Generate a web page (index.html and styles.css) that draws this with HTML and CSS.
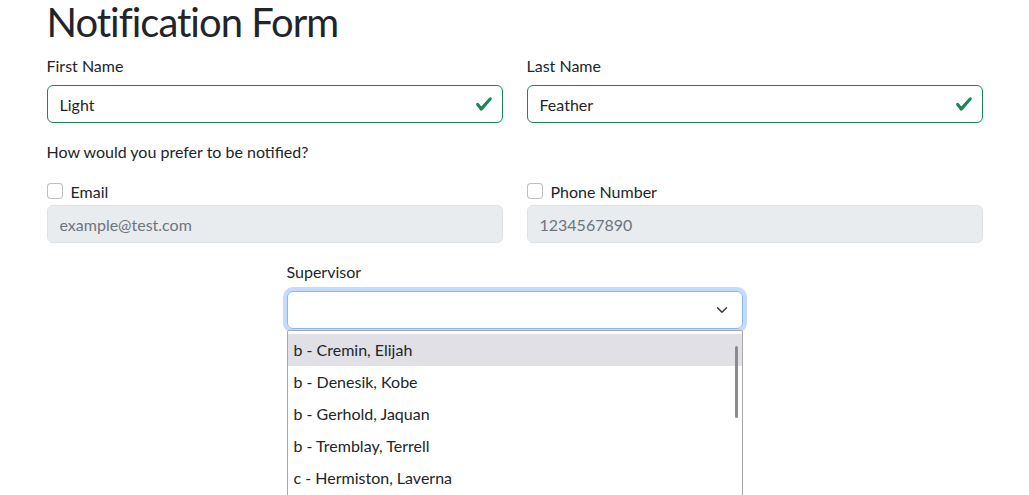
FILE: index.html
```html
<!DOCTYPE html>
<html lang="en">
<head>
<meta charset="utf-8">
<title>Notification Form</title>
<link rel="stylesheet" href="styles.css">
</head>
<body>
<div class="container">
  <h1 class="title">Notification Form</h1>
  <div class="row">
    <div class="field">
      <label class="form-label">First Name</label>
      <div class="input valid">
        <span class="value">Light</span>
        <svg class="check" viewBox="0 0 8 8" width="18" height="18"><path fill="#198754" d="M2.3 6.73.6 4.53c-.4-1.04.46-1.4 1.1-.8l1.1 1.4 3.4-3.8c.6-.63 1.6-.27 1.2.7l-4 4.6c-.43.5-.8.4-1.1.1z"/></svg>
      </div>
    </div>
    <div class="field">
      <label class="form-label">Last Name</label>
      <div class="input valid">
        <span class="value">Feather</span>
        <svg class="check" viewBox="0 0 8 8" width="18" height="18"><path fill="#198754" d="M2.3 6.73.6 4.53c-.4-1.04.46-1.4 1.1-.8l1.1 1.4 3.4-3.8c.6-.63 1.6-.27 1.2.7l-4 4.6c-.43.5-.8.4-1.1.1z"/></svg>
      </div>
    </div>
  </div>
  <p class="prompt">How would you prefer to be notified?</p>
  <div class="row">
    <div class="field">
      <div class="form-check"><span class="checkbox"></span><label>Email</label></div>
      <div class="input disabled"><span class="placeholder">example@test.com</span></div>
    </div>
    <div class="field">
      <div class="form-check"><span class="checkbox"></span><label>Phone Number</label></div>
      <div class="input disabled"><span class="placeholder">1234567890</span></div>
    </div>
  </div>
  <div class="select-field">
    <label class="form-label">Supervisor</label>
    <div class="select-wrap">
      <div class="select">
        <svg class="chevron" viewBox="0 0 16 16" width="16" height="12"><path fill="none" stroke="#343a40" stroke-linecap="round" stroke-linejoin="round" stroke-width="2" d="m2 5 6 6 6-6"/></svg>
      </div>
      <div class="dropdown">
        <div class="option active">b - Cremin, Elijah</div>
        <div class="option">b - Denesik, Kobe</div>
        <div class="option">b - Gerhold, Jaquan</div>
        <div class="option">b - Tremblay, Terrell</div>
        <div class="option">c - Hermiston, Laverna</div>
        <span class="scroll-thumb"></span>
      </div>
    </div>
  </div>
</div>
</body>
</html>
```

FILE: styles.css
```css
* { box-sizing: border-box; }
html, body { height: 100%; }
body {
  margin: 0;
  overflow: hidden;
  background: #fff;
  color: #212529;
  font-family: "Lato", "Noto Sans", sans-serif;
  font-size: 16px;
  line-height: 24px;
}
.container {
  width: 936px;
  margin: 0 auto;
}
.title {
  margin: 0 0 8px;
  font-size: 40px;
  line-height: 45px;
  font-weight: 400;
  letter-spacing: -1px;
}
.row {
  display: grid;
  grid-template-columns: 1fr 1fr;
  column-gap: 24px;
}
.field { margin-bottom: 16px; }
.form-label {
  display: block;
  margin-bottom: 8px;
  padding-top: 1px;
  height: 24px;
}
.input {
  height: 38px;
  padding: 7px 12px 5px;
  border: 1px solid #dee2e6;
  border-radius: 6px;
  display: flex;
  align-items: center;
  justify-content: space-between;
}
.input.valid {
  border-color: #198754;
  padding-right: 9px;
}
.check { margin-top: -2px; }
.input.disabled {
  background: #e9ecef;
}
.placeholder { color: #6c757d; }
.prompt { margin: 0 0 16px; padding-top: 1px; height: 24px; }
.form-check {
  display: flex;
  align-items: flex-start;
  gap: 8px;
  height: 24px;
  margin-bottom: 2px;
}
.form-check label { padding-top: 1px; }
.checkbox {
  width: 16px;
  height: 16px;
  margin-top: 4px;
  border: 1px solid rgba(0, 0, 0, .25);
  border-radius: 4px;
  background: #fff;
}
.select-field {
  width: 456px;
  margin-left: 240px;
}
.select-wrap { position: relative; }
.select {
  height: 38px;
  border: 1px solid #86b7fe;
  border-radius: 6px;
  box-shadow: 0 0 0 4px rgba(13, 110, 253, .25);
  display: flex;
  align-items: center;
  justify-content: flex-end;
  padding-right: 12px;
}
.dropdown {
  position: absolute;
  top: 39px;
  left: 0;
  width: 100%;
  height: 200px;
  padding-top: 3px;
  background: #fff;
  border: 1px solid #a7a7a7;
  border-radius: 2px;
}
.option {
  height: 32px;
  line-height: 32px;
  padding-left: 6px;
  white-space: nowrap;
}
.option.active { background: #e1e0e6; }
.scroll-thumb {
  position: absolute;
  top: 15px;
  right: 4px;
  width: 3px;
  height: 72px;
  background: #8b8b8b;
  border-radius: 2px;
}
```
